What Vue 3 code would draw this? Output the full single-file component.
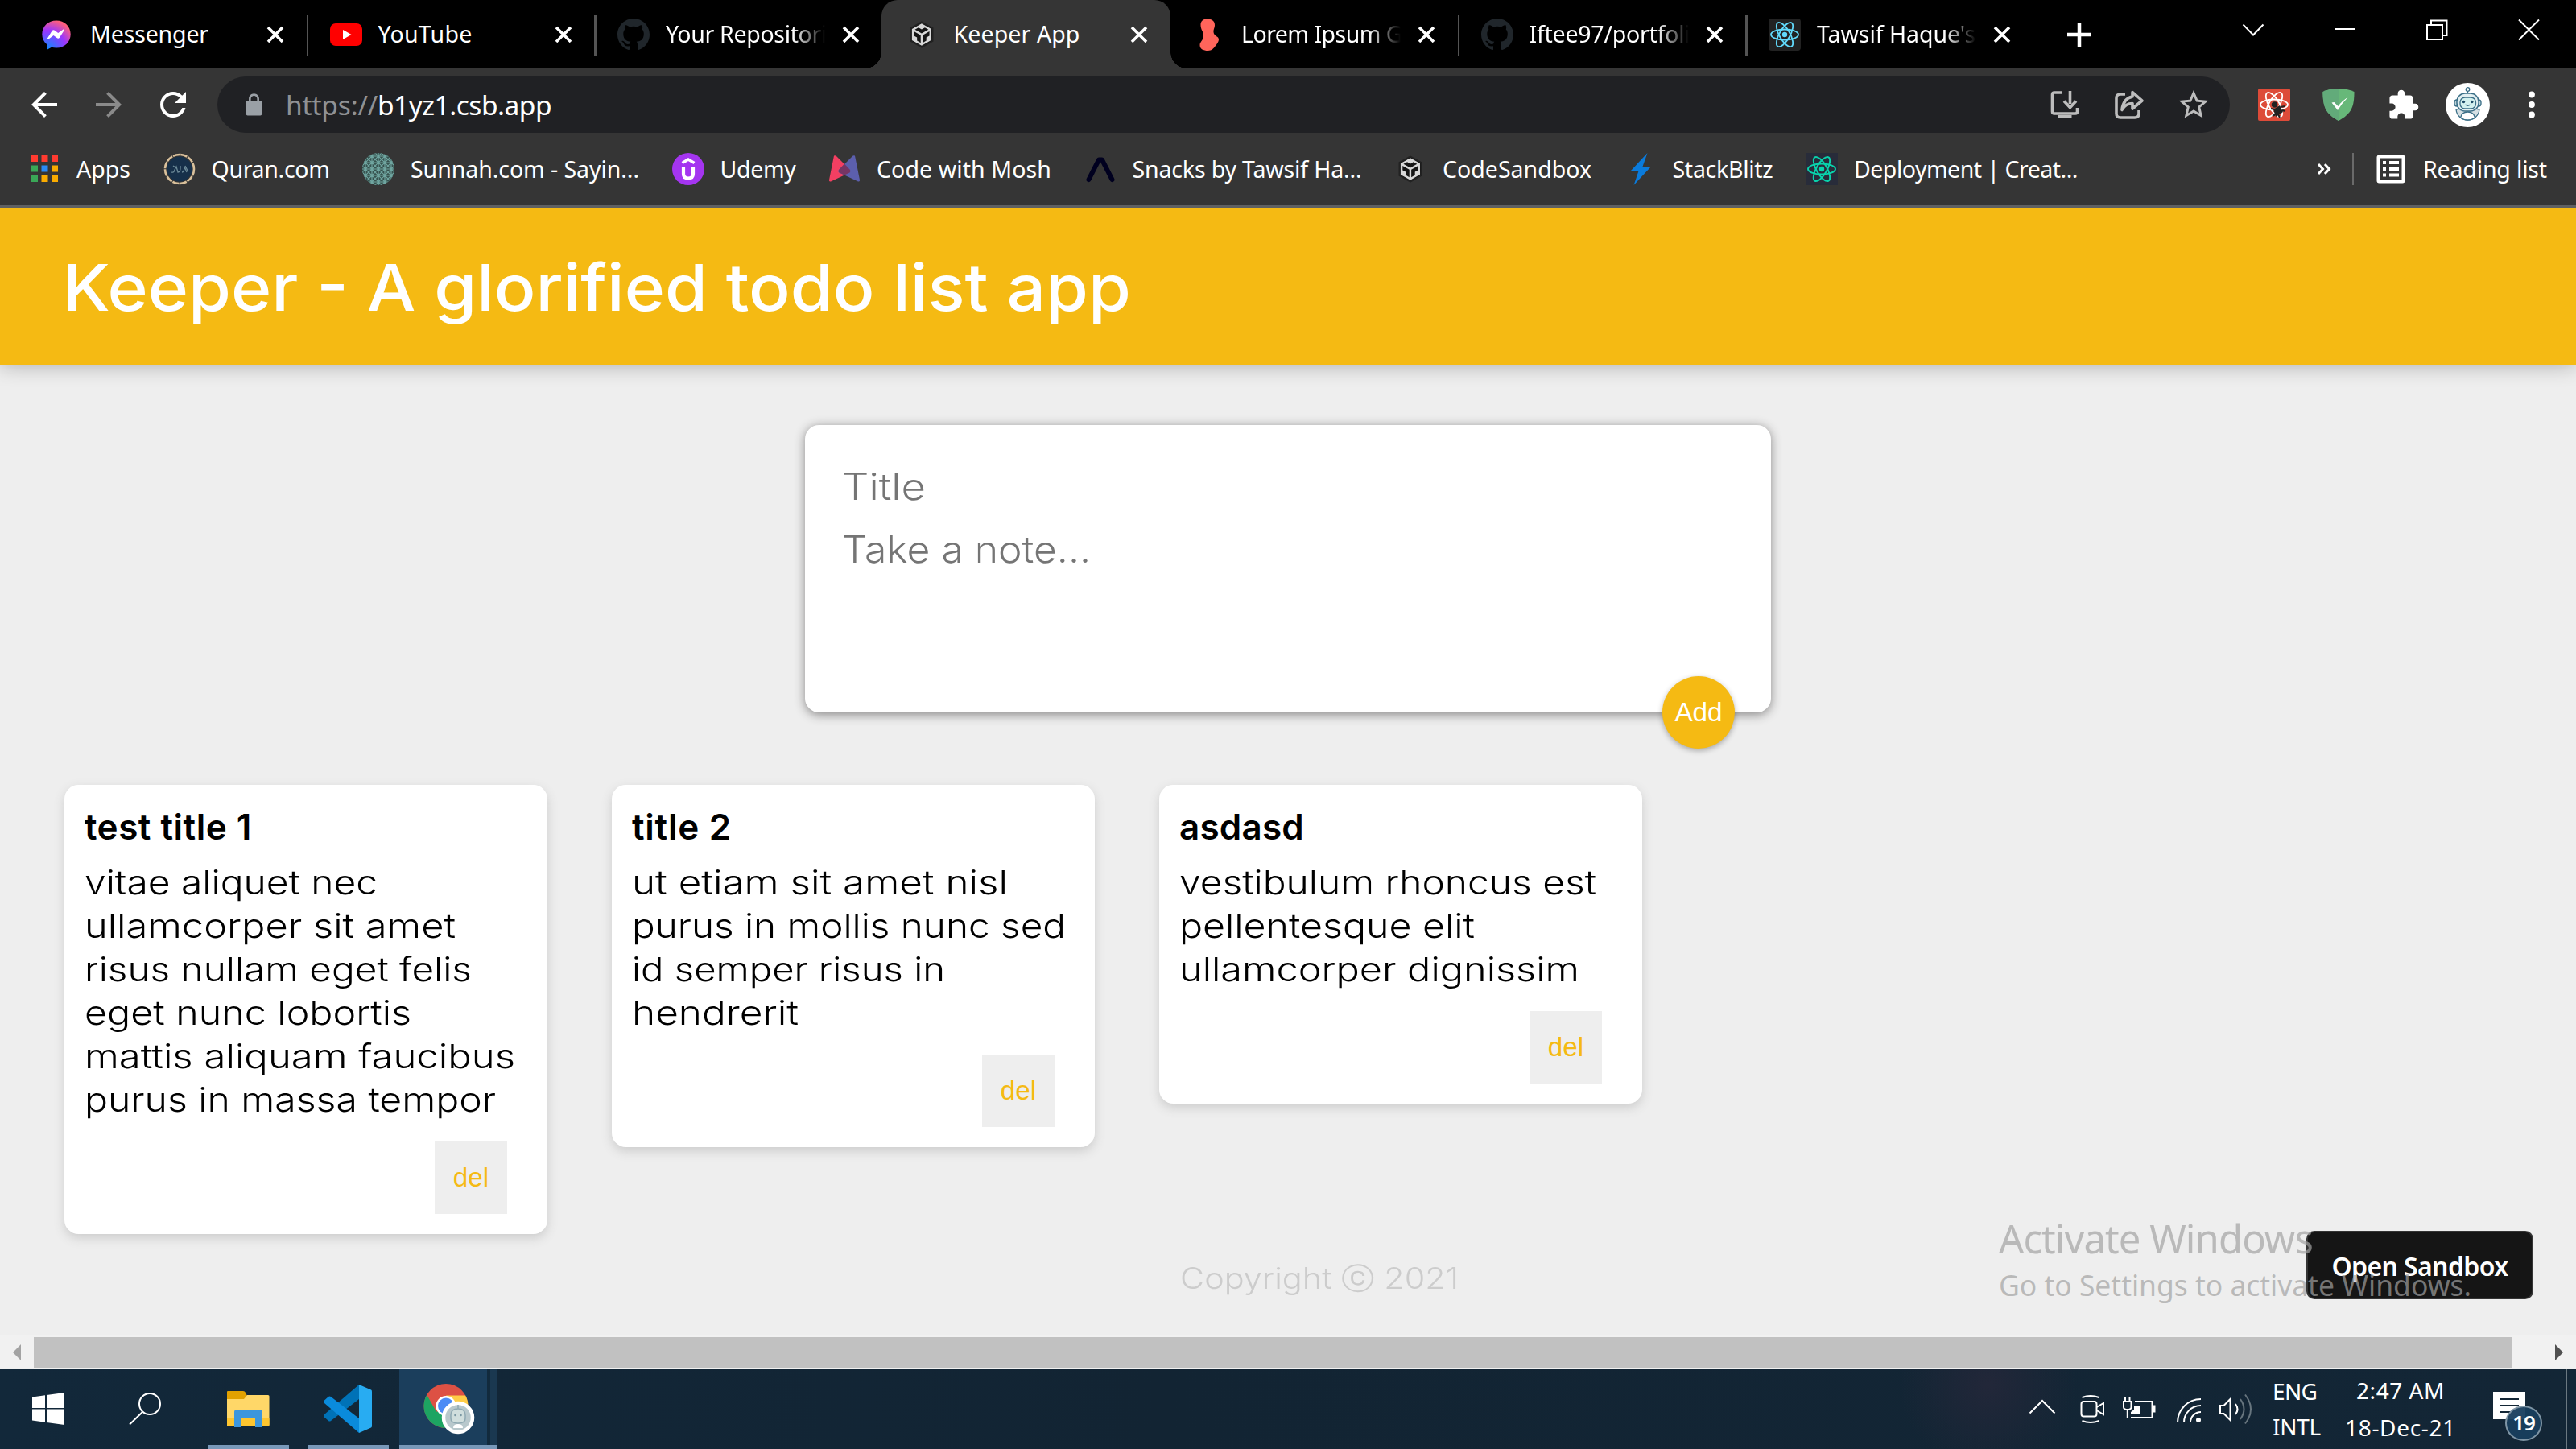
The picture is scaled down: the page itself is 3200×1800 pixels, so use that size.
<script setup>
// Spreads or tightens the letters so a label spans the given width in pixels;
// with .wide the letter shapes themselves are stretched instead.
const vFit = {
  mounted(el, { value, modifiers }) {
    const natural = el.getBoundingClientRect().width
    if (modifiers.wide) {
      el.style.transform = `scaleX(${value / natural})`
      return
    }
    const count = el.textContent.length
    el.style.letterSpacing = `${(value - natural) / count}px`
  },
}

const atom = (color, w) => `
  <g fill="none" stroke="${color}" stroke-width="${w}">
    <ellipse cx="20" cy="20" rx="17" ry="6.5"/>
    <ellipse cx="20" cy="20" rx="17" ry="6.5" transform="rotate(60 20 20)"/>
    <ellipse cx="20" cy="20" rx="17" ry="6.5" transform="rotate(120 20 20)"/>
  </g><circle cx="20" cy="20" r="3.2" fill="${color}"/>`

const octocat = `<path transform="scale(2.5)" fill="#20262b" d="M8 0C3.58 0 0 3.58 0 8c0 3.54 2.29 6.53 5.47 7.59.4.07.55-.17.55-.38 0-.19-.01-.82-.01-1.49-2.01.37-2.53-.49-2.69-.94-.09-.23-.48-.94-.82-1.13-.28-.15-.68-.52-.01-.53.63-.01 1.08.58 1.23.82.72 1.21 1.87.87 2.33.66.07-.52.28-.87.51-1.07-1.78-.2-3.64-.89-3.64-3.95 0-.87.31-1.59.82-2.15-.08-.2-.36-1.02.08-2.12 0 0 .67-.21 2.2.82.64-.18 1.32-.27 2-.27s1.36.09 2 .27c1.53-1.04 2.2-.82 2.2-.82.44 1.1.16 1.92.08 2.12.51.56.82 1.27.82 2.15 0 3.07-1.87 3.75-3.65 3.95.29.25.54.73.54 1.48 0 1.07-.01 1.93-.01 2.2 0 .21.15.46.55.38A8.01 8.01 0 0 0 16 8c0-4.42-3.58-8-8-8z"/>`

const sandbox = `<path fill="#151515" stroke="#222" stroke-width="2" d="M20 4.500 33.500 12v16L20 35.500 6.500 28V12z"/>
  <path transform="translate(5.600 6.200) scale(1.150)" fill="#d8d8d8" d="M2 6l10.455-6L22.91 6 23 17.95 12.455 24 2 18V6zm2.088 2.481v4.757l3.345 1.86v3.516l3.972 2.296v-8.272L4.088 8.481zm16.739 0l-7.317 4.157v8.272l3.972-2.296V15.1l3.345-1.861V8.48zM5.134 6.601l7.303 4.144 7.32-4.18-3.871-2.197-3.41 1.945-3.43-1.968L5.133 6.6z"/>`

const robot = `
  <circle cx="27.500" cy="27.500" r="27.500" fill="#fff"/>
  <path d="M13 33c1 8 7 13 14.500 13S41 41 42 33l-5-1H18z" fill="#d5dfe3" stroke="#3b6f87" stroke-width="1.300"/>
  <path d="M18.500 43c1-5 4-7 9-7s8 2 9 7c-5 4-13 4-18 0z" fill="#fff" stroke="#3b6f87" stroke-width="1.300"/>
  <rect x="11" y="21" width="33" height="8" rx="3" fill="#bcd3da" stroke="#3b6f87" stroke-width="1.300"/>
  <rect x="14" y="13" width="27" height="22" rx="10" fill="#e2eff1" stroke="#3b6f87" stroke-width="1.500"/>
  <rect x="18" y="18" width="19.500" height="14" rx="6" fill="#d3f1ef" stroke="#3b6f87" stroke-width="1.300"/>
  <circle cx="22.500" cy="23.500" r="1.700" fill="#1c4a66"/><circle cx="32.800" cy="23.500" r="1.700" fill="#1c4a66"/>
  <path d="M24.500 27q3 2.500 6 0M27.500 13v-3" fill="none" stroke="#3b6f87" stroke-width="1.300"/>
  <circle cx="27.500" cy="8" r="2.300" fill="#fff" stroke="#3b6f87" stroke-width="1.300"/>`

const icons = {
  messenger: `<defs><radialGradient id="msg" cx="0.2" cy="1" r="1.100"><stop offset="0" stop-color="#0a8bff"/><stop offset=".6" stop-color="#9a36ff"/><stop offset=".95" stop-color="#ff5f7b"/></radialGradient></defs>
    <path fill="url(#msg)" d="M18 2.500C8 2.500.300 9.800.300 19.500c0 5.200 2.200 9.500 5.700 12.600V39l6-3.300c2 .5 4 .8 6 .8 10 0 17.700-7.300 17.700-17S28 2.500 18 2.500z"/>
    <path fill="#fff" d="M7 24.500l5.500-9q1.500-2 3.500-.7l4.200 3.200 6-4.300c1-.6 1.900.2 1.300 1.200l-5.400 8.600q-1.500 2-3.500.6L14.500 21l-6 4.500c-1 .6-2-.1-1.500-1z"/>`,
  youtube: `<rect y="6" width="40" height="28" rx="7" fill="#f00"/><path d="M16 14v12l10.500-6z" fill="#fff"/>`,
  github: octocat,
  sandbox,
  lorem: `<path fill="#ff655b" d="M17.500.500C12.500.500 9.500 3 9.500 8c0 6 3.500 8 3.500 13 0 6-4.500 8-4.500 12 0 5 4.500 7 10 7 5 0 7-3 9-5.500 2.500-3 4.500-6 4.500-8.500 0-4-6-4-6.500-9-.300-4 1.500-5 1.500-9 0-5-3.500-7.500-9.500-7.500z"/>`,
  react: `<rect width="40" height="40" rx="4" fill="#222"/>${atom('#61dafb', 1.8)}`,
  apps: [['#ff3b30', 0, 0], ['#ff3b30', 1, 0], ['#ff3b30', 2, 0], ['#3aa757', 0, 1], ['#2a8af6', 1, 1], ['#f9ab00', 2, 1], ['#3aa757', 0, 2], ['#f9ab00', 1, 2], ['#f9ab00', 2, 2]]
    .map(([c, x, y]) => `<rect x="${4 + x * 12.5}" y="${3 + y * 12.5}" width="8" height="8" fill="${c}"/>`).join(''),
  quran: `<circle cx="20" cy="20" r="18" fill="#353535" stroke="#d9c09b" stroke-width="2.600" stroke-dasharray="8.500 1"/><circle cx="20" cy="20" r="15.500" fill="#16304a"/>
    <path d="M10 24q3 1 4-3l2-4 2 7q3 0 3-5v-3m2 8q3 0 3-7l3 7m-2-8 3 6M12 16l3 2" fill="none" stroke="#6c8a98" stroke-width="1.300"/>`,
  sunnah: `<defs><pattern id="weave" width="8" height="8" patternUnits="userSpaceOnUse"><path d="M0 0l8 8M8 0L0 8M4 0v8M0 4h8" stroke="#6fa5a0" stroke-width="1.200"/></pattern></defs>
    <circle cx="20" cy="20" r="20" fill="#36524f"/><circle cx="20" cy="20" r="20" fill="url(#weave)"/>`,
  udemy: `<circle cx="20" cy="20" r="20" fill="#a435f0"/><path d="M12.500 12.500 20 8l7.500 4.500" fill="none" stroke="#fff" stroke-width="3.600"/><path d="M14 17v9q0 5.500 6 5.500t6-5.500v-9" fill="none" stroke="#fff" stroke-width="4.200"/>`,
  mosh: `<path d="M7 3.500q2-1 3.500 1L27 21q1.500 2-.5 3.500L3 35.500q-2.500.5-2-2z" fill="#f43f62"/><path d="M33 3.500q-2-1-3.500 1L13 21q-1.500 2 .5 3.500L37 35.500q2.500.5 2-2z" fill="#5c5fad"/>
    <path d="M20 13.500 27 21q1 2-.5 3.500L20 27.500l-6.500-3Q12 23 13 21z" fill="#763564"/>`,
  snack: `<path d="M5.500 33 18 8.500h4L34.500 33" fill="none" stroke="#00001f" stroke-width="6" stroke-linecap="round" stroke-linejoin="round"/>`,
  bolt: `<path d="M28.500 0 7.500 22.500h10L11.500 40 33 17H22.500z" fill="#0a7bdc"/>`,
  deploy: `<rect width="40" height="40" fill="#282c3a"/>${atom('#09d3ac', 2)}`,
  reading: `<rect x="4.500" y="4.500" width="31" height="31" rx="1" fill="none" stroke="#fff" stroke-width="4"/><path d="M10 12h4M10 20h4M10 27.500h4M18 12h12M18 20h12M18 27.500h12" stroke="#fff" stroke-width="4"/>`,
  redReact: `<rect width="40" height="40" rx="2" fill="#dd4b39"/>${atom('#fff', 1.8)}
    <circle cx="20.500" cy="20" r="3.800" fill="#222"/><path d="M19 26l8-5 4 8-9 6z" fill="#222"/><path d="M16 25l5 1M18 34l4-2M33 22l-5 1M34 28l-4-1M27 36l-2-4" stroke="#222" stroke-width="2"/>`,
  shield: `<path d="M20 0c7 0 14 1.500 19.500 4 0 18-3 27-19.500 36C3.500 31 .500 22 .500 4 6 1.500 13 0 20 0z" fill="#67b879"/><path d="M20 0C13 0 6 1.500.500 4c0 18 3 27 19.500 36z" fill="#62ab7a"/><path d="M11.500 17.500l3-.5 5 5q5-7 12-11-7 7-12.500 16z" fill="#fff"/>`,
}

const tabs = [
  { icon: 'messenger', text: 'Messenger', w: 147 },
  { icon: 'youtube', text: 'YouTube', w: 117, line: true },
  { icon: 'github', text: 'Your Repositori', w: 200, line: true, fade: true },
  { icon: 'sandbox', text: 'Keeper App', w: 157, active: true },
  { icon: 'lorem', text: 'Lorem Ipsum G', w: 200, fade: true },
  { icon: 'github', text: 'Iftee97/portfoli', w: 200, line: true, fade: true },
  { icon: 'react', text: "Tawsif Haque's", w: 197, line: true, fade: true },
]

const bookmarks = [
  { icon: 'apps', text: 'Apps', w: 67 },
  { icon: 'quran', text: 'Quran.com', w: 147 },
  { icon: 'sunnah', text: 'Sunnah.com - Sayin...', w: 284 },
  { icon: 'udemy', text: 'Udemy', w: 94 },
  { icon: 'mosh', text: 'Code with Mosh', w: 217 },
  { icon: 'snack', text: 'Snacks by Tawsif Ha...', w: 285 },
  { icon: 'sandbox', text: 'CodeSandbox', w: 185 },
  { icon: 'bolt', text: 'StackBlitz', w: 125 },
  { icon: 'deploy', text: 'Deployment | Creat...', w: 278 },
]

const notes = [
  {
    title: 'test title 1', tw: 208,
    lines: [['vitae aliquet nec', 364], ['ullamcorper sit amet', 461], ['risus nullam eget felis', 481], ['eget nunc lobortis', 406], ['mattis aliquam faucibus', 535], ['purus in massa tempor', 511]],
  },
  {
    title: 'title 2', tw: 124,
    lines: [['ut etiam sit amet nisl', 467], ['purus in mollis nunc sed', 539], ['id semper risus in', 389], ['hendrerit', 207]],
  },
  {
    title: 'asdasd', tw: 155,
    lines: [['vestibulum rhoncus est', 518], ['pellentesque elit', 367], ['ullamcorper dignissim', 497]],
  },
]
</script>

<template>
  <div class="screen">
    <div class="tabstrip">
      <div v-for="(t, i) in tabs" :key="i" class="tab" :class="{ active: t.active, line: t.line }">
        <svg class="fav" viewBox="0 0 40 40" v-html="icons[t.icon]"></svg>
        <div class="tab-label" :class="{ fade: t.fade }"><span v-fit="t.w">{{ t.text }}</span></div>
        <svg class="close" viewBox="0 0 22 22"><path d="M2 2l18 18M20 2L2 20" /></svg>
      </div>
      <div class="new-tab">
        <svg width="32" height="32" viewBox="0 0 32 32"><path d="M16 1v30M1 16h30" stroke="#fff" stroke-width="4.500" /></svg>
      </div>
      <div class="window-buttons">
        <svg width="28" height="26" viewBox="0 0 28 26"><path d="M1.500 6.500 14 19.500 26.500 6.500" /></svg>
        <svg width="28" height="26" viewBox="0 0 28 26"><path d="M1.500 12h25" /></svg>
        <svg width="28" height="26" viewBox="0 0 28 26"><path d="M2 7h19v18H2zM7 7V1.500h19.500V20H21" /></svg>
        <svg width="28" height="26" viewBox="0 0 28 26"><path d="M2 .500l25 25M27 .500l-25 25" /></svg>
      </div>
    </div>

    <div class="toolbar">
      <svg class="nav" viewBox="0 0 24 24"><path fill="#fff" d="M20 11H7.830l5.590-5.590L12 4l-8 8 8 8 1.410-1.410L7.830 13H20v-2z" /></svg>
      <svg class="nav" viewBox="0 0 24 24"><path fill="#8a8a8a" transform="matrix(-1 0 0 1 24 0)" d="M20 11H7.830l5.590-5.590L12 4l-8 8 8 8 1.410-1.410L7.830 13H20v-2z" /></svg>
      <svg class="nav" viewBox="0 0 24 24"><path fill="#fff" d="M17.650 6.350C16.200 4.900 14.210 4 12 4c-4.420 0-7.990 3.580-7.990 8s3.570 8 7.990 8c3.730 0 6.840-2.550 7.730-6h-2.080c-.82 2.330-3.040 4-5.650 4-3.310 0-6-2.690-6-6s2.690-6 6-6c1.660 0 3.140.69 4.220 1.780L13 11h7V4l-2.350 2.350z" /></svg>
      <div class="omnibox">
        <svg class="lock" viewBox="0 0 24 24"><path fill="#9aa0a6" d="M18 8h-1V6c0-2.760-2.240-5-5-5S7 3.240 7 6v2H6c-1.100 0-2 .9-2 2v10c0 1.100.9 2 2 2h12c1.100 0 2-.9 2-2V10c0-1.100-.9-2-2-2zM9 6c0-1.660 1.340-3 3-3s3 1.340 3 3v2H9V6z" /></svg>
        <div class="url"><span v-fit="114" class="scheme">https://</span><span v-fit="216">b1yz1.csb.app</span></div>
        <svg class="action" viewBox="0 0 44 44"><path d="M19 7H9q-2.500 0-2.500 2.500v21Q6.500 33 9 33h26q2.500 0 2.500-2.500V26" /><path d="M28.500 5v16M21 17.500l7.500 8 7.500-8" /><path d="M13.500 35h17v4h-17z" fill="#bdbdbd" stroke="none" /></svg>
        <svg class="action" viewBox="0 0 44 44"><path d="M17 9h-6q-5 0-5 5v19q0 5 5 5h18q5 0 5-5v-4" /><path stroke-linejoin="round" d="M26 6.500 38 17 26 27v-6.500c-6 0-10 2.500-13 8 1-9 5-15 13-16.500z" /></svg>
        <svg class="action" viewBox="0 0 24 24"><path fill="#bdbdbd" stroke="none" d="M22 9.240l-7.190-.62L12 2 9.190 8.630 2 9.240l5.460 4.730L5.820 21 12 17.270 18.180 21l-1.630-7.030L22 9.240zM12 15.400l-3.760 2.270 1-4.280-3.320-2.880 4.380-.38L12 6.100l1.710 4.040 4.380.38-3.320 2.880 1 4.280L12 15.400z" /></svg>
      </div>
      <svg class="ext" viewBox="0 0 40 40" v-html="icons.redReact"></svg>
      <svg class="ext" viewBox="0 0 40 40" v-html="icons.shield"></svg>
      <svg class="puzzle" viewBox="0 0 24 24"><path fill="#fff" d="M20.500 11H19V7c0-1.100-.9-2-2-2h-4V3.500C13 2.120 11.880 1 10.500 1S8 2.120 8 3.500V5H4c-1.100 0-1.990.9-1.990 2v3.800H3.500c1.490 0 2.700 1.210 2.700 2.700s-1.210 2.700-2.700 2.700H2V20c0 1.100.9 2 2 2h3.800v-1.500c0-1.490 1.210-2.700 2.700-2.700 1.490 0 2.700 1.210 2.700 2.700V22H17c1.100 0 2-.9 2-2v-4h1.500c1.380 0 2.500-1.120 2.500-2.500S21.880 11 20.500 11z" /></svg>
      <svg class="avatar" viewBox="0 0 55 55" v-html="robot"></svg>
      <svg class="kebab" viewBox="0 0 10 40"><circle cx="5" cy="7.500" r="3.900" /><circle cx="5" cy="20" r="3.900" /><circle cx="5" cy="32.500" r="3.900" /></svg>
    </div>

    <div class="bookmarks">
      <div v-for="b in bookmarks" :key="b.text" class="bookmark">
        <svg class="fav" viewBox="0 0 40 40" v-html="icons[b.icon]"></svg>
        <span v-fit="b.w">{{ b.text }}</span>
      </div>
      <svg class="more" viewBox="0 0 18 16"><path d="M2 2l5.500 6L2 14M10 2l5.500 6L10 14" /></svg>
      <div class="divider"></div>
      <div class="bookmark">
        <svg class="fav" viewBox="0 0 40 40" v-html="icons.reading"></svg>
        <span v-fit="154">Reading list</span>
      </div>
    </div>

    <div class="page">
      <header><h1 v-fit.wide="1327">Keeper - A glorified todo list app</h1></header>
      <form class="create">
        <div class="field"><span v-fit.wide="104">Title</span></div>
        <div class="field second"><span v-fit.wide="309">Take a note...</span></div>
        <button type="button" class="add">Add</button>
      </form>
      <div class="notes">
        <div v-for="n in notes" :key="n.title" class="note">
          <h2><span v-fit="n.tw">{{ n.title }}</span></h2>
          <p><span v-for="l in n.lines" :key="l[0]" class="row"><span v-fit.wide="l[1]">{{ l[0] }}</span></span></p>
          <button type="button" class="del">del</button>
        </div>
      </div>
      <footer><span v-fit.wide="346">Copyright ⓒ 2021</span></footer>
      <div class="open-sandbox"><span v-fit="219">Open Sandbox</span></div>
      <div class="watermark">
        <div class="wm-title"><span v-fit="390">Activate Windows</span></div>
        <div class="wm-sub"><span v-fit="587">Go to Settings to activate Windows.</span></div>
      </div>
    </div>

    <div class="scrollbar">
      <svg width="42" height="41" viewBox="0 0 42 41"><path d="M26 11v20L16 21z" fill="#a3a3a3" /></svg>
      <div class="thumb"></div>
      <svg width="80" height="41" viewBox="0 0 80 41"><path d="M54 11v20l10-10z" fill="#505050" /></svg>
    </div>

    <div class="taskbar">
      <div class="cell start">
        <svg width="40" height="40" viewBox="0 0 40 40"><path fill="#fff" d="M0 5.500 16 3.200V19H0zM18 2.900 40 0v19H18zM0 20.500h16v16.300L0 34.500zM18 20.500h22V40l-22-2.900z" /></svg>
      </div>
      <div class="cell start">
        <svg width="40" height="40" viewBox="0 0 40 40"><g fill="none" stroke="#fff" stroke-width="2"><circle cx="26" cy="14" r="13" /><path d="M17 24 1 39.500" /></g></svg>
      </div>
      <div class="cell app folder">
        <svg width="54" height="46" viewBox="0 0 54 46">
          <path d="M1 2q0-1 1-1h19q2 0 3 2l2 4v8H1z" fill="#e2a100" /><path d="M1 11h21l4-5h26q1.500 0 1.500 1.500V43q0 1.500-1.500 1.500H1z" fill="#ffd768" /><path d="M1 34h52.500v9q0 1.500-1.500 1.500H2q-1 0-1-1.500z" fill="#fdc52f" />
          <path d="M10 46V27q0-3 3-3h29q3 0 3 3v19h-9V34H18v12z" fill="#3c96dd" />
        </svg>
      </div>
      <div class="cell app code">
        <svg width="62" height="62" viewBox="0 0 62 62">
          <path d="M45 1v18L10 46q-1.500 1-3 0l-5-4.500q-1.500-2 0-3.500z" fill="#0072b7" /><path d="M45 61V43L10 16q-1.500-1-3 0l-5 4.500q-1.500 2 0 3.500z" fill="#0a8bdc" /><path d="M45 1l15 6.500q1 .5 1 2v43q0 1.500-1 2L45 61z" fill="#28acf2" />
        </svg>
      </div>
      <div class="cell app chrome">
        <svg width="64" height="64" viewBox="0 0 64 64">
          <circle cx="28" cy="28.500" r="27.500" fill="#dd5144" />
          <path d="M4.200 14.700A27.500 27.500 0 0 0 28 56l12-20.500-24 0z" fill="#1da462" />
          <path d="M28 15.500h24.200A27.500 27.500 0 0 1 28 56l12-20.500z" fill="#ffcd46" />
          <circle cx="28" cy="28.500" r="12.500" fill="#fff" /><circle cx="28" cy="28.500" r="10" fill="#4c8bf5" />
          <circle cx="43" cy="43" r="18" fill="#b8c8cc" stroke="#fff" stroke-width="4.500" />
          <path d="M34 40q0-8 9-8t9 8v4q0 6-9 6t-9-6zM43 32v-5" fill="#d0dedd" stroke="#8fa9b2" stroke-width="1.500" /><circle cx="39.500" cy="40" r="1.300" fill="#7896a2" /><circle cx="46.500" cy="40" r="1.300" fill="#7896a2" /><path d="M37 56q0-5 6-5t6 5z" fill="#fff" />
        </svg>
      </div>
      <div class="tray">
        <svg width="300" height="60" viewBox="0 0 300 60" fill="none" stroke="#fff" stroke-width="2">
          <path d="M1.500 35.500 17 20l15.500 15.500" />
          <rect x="65.500" y="21" width="19" height="18.500" rx="3" /><path d="M84.500 28l8.500-5v14l-8.500-5M66.500 16q10.500-4 21 0M66.500 45q10.500 4 21 0" />
          <path d="M132 21h21.500v20H127M156 27v6.500" /><path d="M154.500 26.500h2v7h-2z" fill="#fff" /><path d="M131 26h7v10h-11v-2l4-3z" fill="#fff" stroke="none" /><path d="M118 21h9.500v7q0 3-4.700 3t-4.800-3zM122.800 31v11M120 21v-6M125.500 21v-6" />
          <path d="M185 47a29 29 0 0 1 29-29M193 47a21 21 0 0 1 21-21M201 47a13 13 0 0 1 13-13" /><circle cx="211" cy="44" r="3" fill="#fff" stroke="none" />
          <path d="M238 26h4.500l8-8v26l-8-8H238zM257 24q5 6.500 0 13" /><path d="M263 18q9 12.500 0 25M269 12.500q14 18 0 36" stroke="#67757e" />
        </svg>
        <div class="stack lang"><span v-fit="59">ENG</span><span v-fit="60">INTL</span></div>
        <div class="stack clock"><span v-fit="110">2:47 AM</span><span v-fit="138">18-Dec-21</span></div>
        <div class="notif">
          <svg width="42" height="36" viewBox="0 0 42 36"><path d="M0 0h40v34H15L8 34H0z" fill="#fff" /><path d="M8 9h24M8 17h24M8 25h14" stroke="#132636" stroke-width="2" /></svg>
          <div class="badge">19</div>
        </div>
        <div class="peek"></div>
      </div>
    </div>
  </div>
</template>

<style>
body {
  background: #eee;
}
</style>

<style scoped>
.screen {
  width: 3200px;
  height: 1800px;
  overflow: hidden;
  display: flex;
  flex-direction: column;
  font-family: "Noto Sans", sans-serif;
  color: #fff;
}
span {
  display: inline-block;
  white-space: pre;
  transform-origin: 0 50%;
}
svg {
  flex: none;
  display: block;
}
.tabstrip {
  height: 85px;
  flex: none;
  background: #000;
  display: flex;
  padding-left: 24px;
  font-size: 28.5px;
}
.tab {
  width: 357.5px;
  flex: none;
  box-sizing: border-box;
  padding-left: 28px;
  display: flex;
  align-items: center;
  position: relative;
}
.tab.line::before {
  content: "";
  position: absolute;
  left: -1px;
  top: 19px;
  width: 2.5px;
  height: 50px;
  background: #545454;
}
.tab.active {
  background: #353535;
  border-radius: 20px 20px 0 0;
  width: 359.5px;
  margin-left: -2px;
  padding-left: 30px;
}
.tab.active::before,
.tab.active::after {
  content: "";
  position: absolute;
  bottom: 0;
  width: 20px;
  height: 20px;
}
.tab.active::before {
  left: -20px;
  background: radial-gradient(circle at 0 0, transparent 19.5px, #353535 20px);
}
.tab.active::after {
  right: -20px;
  background: radial-gradient(circle at 100% 0, transparent 19.5px, #353535 20px);
}
.fav {
  width: 40px;
  height: 40px;
}
.tab-label {
  width: 202px;
  margin-left: 20px;
  flex: none;
  padding-bottom: 1px;
}
.tab-label.fade {
  width: 198px;
  margin-right: 4px;
  overflow: hidden;
  mask-image: linear-gradient(90deg, #000 158px, transparent 198px);
}
.close {
  width: 22px;
  height: 22px;
  margin-left: 17px;
  fill: none;
  stroke: #fff;
  stroke-width: 3.6;
}
.new-tab {
  width: 60px;
  display: flex;
  align-items: center;
  padding-left: 40px;
}
.window-buttons {
  margin-left: 158px;
  padding-top: 24px;
  display: flex;
  gap: 86px;
}
.window-buttons svg {
  fill: none;
  stroke: #fff;
  stroke-width: 2;
}
.toolbar {
  height: 90px;
  flex: none;
  background: #353535;
  display: flex;
  align-items: center;
  padding-left: 31px;
}
.nav {
  width: 48px;
  height: 48px;
  margin-right: 32px;
}
.omnibox {
  width: 2500px;
  height: 70px;
  flex: none;
  box-sizing: border-box;
  margin-left: -1px;
  border-radius: 35px;
  background: #202124;
  display: flex;
  align-items: center;
  gap: 36px;
  padding: 0 23px 0 30px;
}
.lock {
  width: 31px;
  height: 31px;
}
.url {
  font-size: 33.5px;
  flex: 1;
  margin-left: -12px;
}
.scheme {
  color: #8f9194;
}
.action {
  width: 44px;
  height: 44px;
  fill: none;
  stroke: #bdbdbd;
  stroke-width: 3.6;
}
.ext {
  width: 40px;
  height: 40px;
  margin-left: 35px;
}
.ext + .ext {
  margin-left: 40px;
}
.puzzle {
  width: 41px;
  height: 41px;
  margin-left: 40px;
}
.avatar {
  width: 55px;
  height: 55px;
  margin-left: 32px;
}
.kebab {
  width: 10px;
  height: 40px;
  margin-left: 47px;
  fill: #fff;
}
.bookmarks {
  height: 80px;
  flex: none;
  border-bottom: 3px solid #5f6062;
  background: #353535;
  display: flex;
  align-items: center;
  padding-left: 35px;
  font-size: 28.5px;
}
.bookmark {
  display: flex;
  align-items: center;
  gap: 20px;
  margin-right: 40.5px;
  padding-bottom: 10px;
}
.bookmark span {
  padding-bottom: 1px;
}
.more {
  width: 18px;
  height: 16px;
  margin: 0 26px 10px auto;
  fill: none;
  stroke: #fff;
  stroke-width: 3;
}
.divider {
  width: 2px;
  height: 40px;
  margin: 0 26px 10px 0;
  background: #6a6a6a;
}
.bookmark:last-child {
  margin-right: 36px;
}
.page {
  height: 1401px;
  flex: none;
  background: #eee;
  position: relative;
  overflow: hidden;
  font-family: Inter, sans-serif;
  color: #000;
}
header {
  height: 195px;
  background: #f5ba13;
  box-shadow: 0 0 25px rgba(0, 0, 0, 0.3);
  color: #fff;
  padding-left: 78px;
}
h1 {
  display: inline-block;
  margin: 0;
  line-height: 198px;
  font-size: 80px;
  font-weight: 500;
  white-space: pre;
  transform-origin: 0 50%;
}
.create {
  width: 1200px;
  height: 357px;
  box-sizing: border-box;
  margin: 75px auto 0;
  padding: 37px 46px 0;
  background: #fff;
  border-radius: 17.5px;
  box-shadow: 0 2.5px 12.5px rgb(138, 137, 137);
  position: relative;
}
.field {
  height: 78px;
  line-height: 78px;
  font-size: 46px;
  font-weight: 300;
  color: #757575;
}
.add {
  position: absolute;
  right: 45px;
  bottom: -45px;
  width: 90px;
  height: 90px;
  border: none;
  border-radius: 50%;
  padding: 0;
  background: #f5ba13;
  color: #fff;
  box-shadow: 0 2.5px 7.5px rgba(0, 0, 0, 0.3);
  font: 33.3px "Liberation Sans", sans-serif;
}
.notes {
  height: 558px;
  display: flex;
  align-items: flex-start;
  gap: 80px;
  margin: 90px 0 0 80px;
}
.note {
  width: 600px;
  box-sizing: border-box;
  padding: 25px;
  background: #fff;
  border-radius: 17.5px;
  box-shadow: 0 5px 12.5px #ccc;
  display: flex;
  flex-direction: column;
}
h2 {
  margin: 0 0 15px;
  line-height: 54px;
  font-size: 44px;
  font-weight: 600;
}
p {
  margin: 0 0 25px;
  font-size: 41px;
  font-weight: 300;
  line-height: 54px;
}
.row {
  display: block;
}
.del {
  align-self: flex-end;
  width: 90px;
  height: 90px;
  margin-right: 25px;
  border: none;
  padding: 0;
  background: #eee;
  color: #f5ba13;
  font: 33.3px "Liberation Sans", sans-serif;
}
footer {
  margin: 28px 0 0 1466px;
  font-size: 37px;
  font-weight: 300;
  line-height: 54px;
  color: #ccc;
}
.open-sandbox {
  position: absolute;
  left: 2865px;
  top: 1271px;
  width: 282px;
  height: 85px;
  box-sizing: border-box;
  border: 2px solid #343434;
  border-radius: 10px;
  background: #151515;
  color: #fff;
  text-align: center;
  font: 600 32px/84px "Noto Sans", sans-serif;
}
.watermark {
  position: absolute;
  left: 2483px;
  top: 1250px;
  color: rgba(162, 162, 162, 0.7);
  font-family: "Noto Sans", sans-serif;
}
.wm-title {
  font-size: 49px;
  line-height: 60px;
}
.wm-sub {
  font-size: 35.5px;
  line-height: 57px;
}
.scrollbar {
  height: 41px;
  flex: none;
  background: #f1f1f1;
  display: flex;
}
.thumb {
  flex: 1;
  margin: 2px 0 1px;
  background: #c1c1c1;
}
.taskbar {
  height: 100px;
  flex: none;
  display: flex;
  background: radial-gradient(circle at 2470px 20px, #222739 0, transparent 110px), linear-gradient(90deg, #12283a, #122433 45%, #132636);
}
.cell {
  display: flex;
  align-items: center;
  justify-content: center;
  box-sizing: border-box;
}
.start {
  width: 120px;
}
.app {
  width: 101px;
  border-bottom: 5px solid #7898b9;
  padding: 5px 2px 0 0;
}
.folder {
  margin-left: 18px;
}
.code {
  margin-left: 23px;
}
.chrome {
  margin-left: 13px;
  width: 121px;
  padding: 5px 0 0 3px;
  background: linear-gradient(90deg, #1b3e5c 109px, #122a3d 109px, #122a3d 113px, #1a3850 113px);
}
.tray {
  margin-left: auto;
  display: flex;
  align-items: center;
  font-size: 28px;
}
.tray > svg {
  margin-right: 3px;
}
.stack {
  display: flex;
  flex-direction: column;
}
.lang {
  line-height: 44px;
}
.clock {
  line-height: 46px;
  align-items: center;
  margin-left: 30px;
}
.notif {
  position: relative;
  margin: -6px 0 0 46px;
}
.badge {
  position: absolute;
  left: 15px;
  top: 17px;
  width: 42px;
  height: 40px;
  border: 2px solid #7f95a5;
  border-radius: 50%;
  background: rgba(24, 62, 94, 0.95);
  font-size: 26px;
  font-weight: 600;
  line-height: 38px;
  text-align: center;
  letter-spacing: -1px;
}
.peek {
  width: 2px;
  height: 100px;
  margin: 0 11px 0 48px;
  background: #6b7881;
}
</style>
